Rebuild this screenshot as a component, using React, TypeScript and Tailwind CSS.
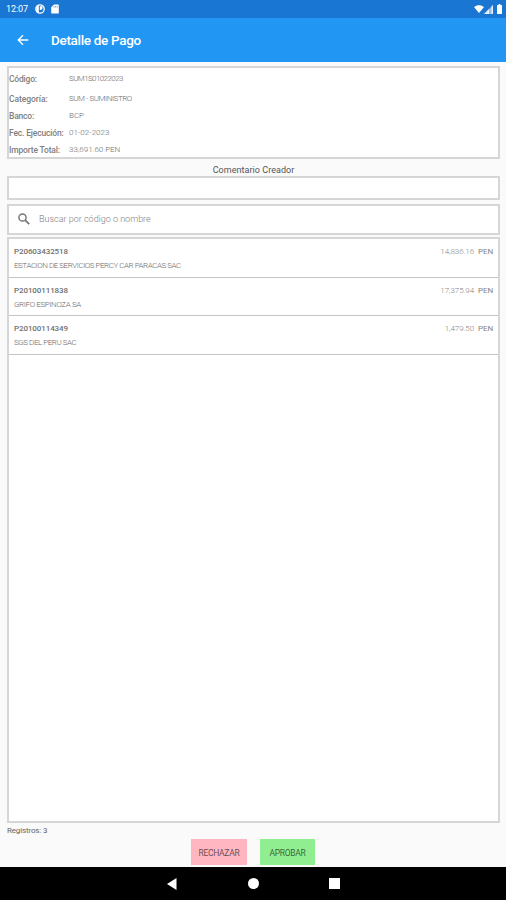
import type { ReactNode } from 'react';

interface Detail {
  label: string;
  value: string;
  rowClass: string;
  labelClass: string;
  valueClass: string;
}

interface Payment {
  code: string;
  name: string;
  amount: string;
  nameClass: string;
}

const details: Detail[] = [
  { label: 'Código:', value: 'SUM1S01022023', rowClass: 'h-[22px]', labelClass: 'tracking-[-0.2px]', valueClass: 'tracking-[-0.6px]' },
  { label: 'Categoría:', value: 'SUM - SUMINISTRO', rowClass: 'h-[18px]', labelClass: 'tracking-[-0.05px]', valueClass: 'tracking-[-0.45px]' },
  { label: 'Banco:', value: 'BCP', rowClass: 'h-[16px]', labelClass: 'tracking-[-0.2px]', valueClass: 'tracking-[0px]' },
  { label: 'Fec. Ejecución:', value: '01-02-2023', rowClass: 'h-[18px]', labelClass: 'tracking-[-0.17px]', valueClass: 'tracking-[0.05px]' },
  { label: 'Importe Total:', value: '33,691.60 PEN', rowClass: 'h-[16px]', labelClass: 'tracking-[-0.17px]', valueClass: 'tracking-[-0.03px]' },
];

const payments: Payment[] = [
  { code: 'P20603432518', name: 'ESTACION DE SERVICIOS PERCY CAR PARACAS SAC', amount: '14,836.16', nameClass: 'tracking-[-0.46px]' },
  { code: 'P20100111838', name: 'GRIFO ESPINOZA SA', amount: '17,375.94', nameClass: 'tracking-[-0.38px]' },
  { code: 'P20100114349', name: 'SGS DEL PERU SAC', amount: '1,479.50', nameClass: 'tracking-[-0.45px]' },
];

const Box = ({ className, children }: { className: string; children?: ReactNode }) => (
  <div className={`border-2 border-[#d6d6d6] bg-white ${className}`}>{children}</div>
);

const StatusBar = () => (
  <div className="flex h-[18px] shrink-0 items-center bg-[#1976d2] pl-[6px] pr-[4px] text-white">
    <span className="w-[29px] text-[9px] leading-none tracking-[-0.1px]">12:07</span>
    <svg className="h-[10px] w-[10px]" viewBox="0 0 10 10">
      <circle cx="5" cy="5" r="4.2" fill="none" stroke="#fff" strokeWidth="1.3" />
      <path d="M4.800 2.200h2.700v2.500L6 6H4.800z" fill="#fff" />
      <path d="M1 2.800L3.800 1v8L1.800 7.800z" fill="#fff" />
    </svg>
    <svg className="ml-[6px] h-[10px] w-[8px]" viewBox="0 0 8 10">
      <path d="M3 .5h4.2a.6.6 0 01.6.6v7.8a.6.6 0 01-.6.6H.8a.6.6 0 01-.6-.6V3.3z" fill="#fff" />
      <path d="M3 2v1.5M4.6 2v1.5M6.2 2v1.5" stroke="#1976d2" strokeWidth=".6" />
    </svg>
    <div className="ml-auto flex items-center">
      <svg className="h-[8px] w-[10px]" viewBox="0 0 11 9">
        <path d="M0 2.5C3-.4 8-.4 11 2.5L5.5 9z" fill="#fff" />
      </svg>
      <svg className="h-[9px] w-[9px]" viewBox="0 0 9 9">
        <path d="M0 9l9-9v9z" fill="#fff" opacity=".55" />
        <path d="M0 9l5-5v5zM7.5 1.5L9 0v9H7.5z" fill="#fff" opacity=".75" />
      </svg>
      <svg className="ml-[4px] h-[10px] w-[5px]" viewBox="0 0 6 10" preserveAspectRatio="none">
        <path d="M2 0h2v1h1.4c.3 0 .6.3.6.6v7.8c0 .3-.3.6-.6.6H.6a.6.6 0 01-.6-.6V1.600C0 1.300.3 1 .6 1H2z" fill="#fff" />
      </svg>
    </div>
  </div>
);

const AppBar = () => (
  <div className="flex h-[44px] shrink-0 items-center bg-[#2196f3] pl-[17px] text-white">
    <svg className="h-[12px] w-[12px]" viewBox="0 0 12 12" fill="none" stroke="#fff" strokeWidth="1.4">
      <path d="M11.300 6H1.700M6 1.300L1.300 6 6 10.700" />
    </svg>
    <h1 className="ml-[22px] mt-[2px] text-[13.500px] font-medium leading-none tracking-[-0.32px]">Detalle de Pago</h1>
  </div>
);

const PaymentRow = ({ payment }: { payment: Payment }) => (
  <div className="h-[38.67px] border-b-[1.5px] border-[#c4c4c4] pl-[5px] pr-[5px] pt-[8px]">
    <div className="flex h-[10px] items-center justify-between text-[8px] leading-none">
      <span className="font-medium tracking-[-0.1px] text-[#707070]">{payment.code}</span>
      <span className="flex gap-[4px] text-[#858585]">
        <span className="font-light tracking-[-0.1px]">{payment.amount}</span>
        <span className="font-normal tracking-[-0.1px]">PEN</span>
      </span>
    </div>
    <div className={`mt-[5px] whitespace-nowrap text-[8px] font-light leading-none text-[#6c6c6c] ${payment.nameClass}`}>{payment.name}</div>
  </div>
);

const NavBar = () => (
  <div className="flex h-[33px] shrink-0 items-center bg-black pl-[167px]">
    <svg className="h-[12px] w-[10px]" viewBox="0 0 10 12">
      <path d="M0 6l9.500-6v12z" fill="#fff" />
    </svg>
    <div className="ml-[71px] h-[11px] w-[11px] rounded-full bg-white" />
    <div className="ml-[70px] h-[11px] w-[11px] bg-white" />
  </div>
);

export default function App() {
  return (
    <div className="flex h-[900px] w-[506px] flex-col overflow-hidden bg-[#fafafa] font-['Roboto',sans-serif]">
      <StatusBar />
      <AppBar />
      <main className="flex flex-1 flex-col pl-[7px] pr-[6px] pt-[4px]">
        <Box className="h-[93px]">
          {details.map((d) => (
            <div key={d.label} className={`flex items-center text-[8px] leading-none ${d.rowClass}`}>
              <span className={`w-[60px] whitespace-nowrap text-[8.500px] font-medium text-[#808080] ${d.labelClass}`}>{d.label}</span>
              <span className={`font-light text-[#6c6c6c] ${d.valueClass}`}>{d.value}</span>
            </div>
          ))}
        </Box>
        <div className="flex h-[17px] items-center justify-center pt-[5px] text-[9px] leading-none tracking-[0.05px] text-[#555555]">
          Comentario Creador
        </div>
        <Box className="h-[24px]" />
        <Box className="mt-[4px] flex h-[31px] items-center pl-[9px]">
          <svg className="-mt-[1px] h-[12px] w-[12px]" viewBox="0 0 12 12" fill="none" stroke="#777777">
            <circle cx="4.500" cy="4.500" r="3.600" strokeWidth="1.500" />
            <path d="M7.200 7.200l4 4" strokeWidth="1.800" />
          </svg>
          <span className="ml-[9px] text-[9px] font-light leading-none text-[#808080]">Buscar por código o nombre</span>
        </Box>
        <Box className="mt-[2px] h-[586px]">
          {payments.map((p) => (
            <PaymentRow key={p.code} payment={p} />
          ))}
        </Box>
        <div className="mt-[4px] text-[8px] leading-[8px] tracking-[-0.15px] text-[#666666]">Registros: 3</div>
        <div className="mt-[4px] flex gap-[13px] pl-[184px] text-[8.500px] leading-none tracking-[-0.3px] text-[#000000a0]">
          <button className="h-[26px] w-[56px] bg-[#ffb6c1] pt-[2px]">RECHAZAR</button>
          <button className="h-[26px] w-[55px] bg-[#90ee90] pt-[2px]">APROBAR</button>
        </div>
      </main>
      <NavBar />
    </div>
  );
}
